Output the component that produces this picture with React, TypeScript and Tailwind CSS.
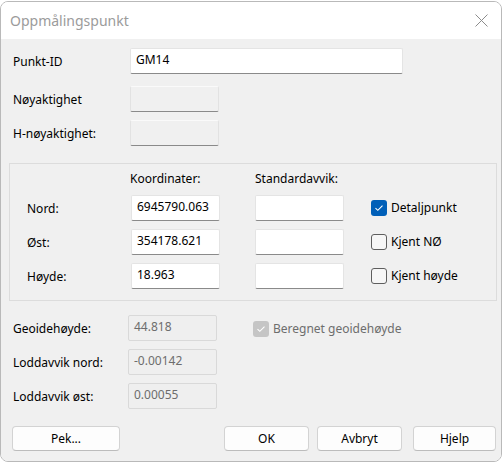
import React from 'react';

const font = { fontFamily: '"Noto Sans", "Open Sans", sans-serif' };

interface FieldProps {
  value?: string;
  width?: string;
  variant?: 'edit' | 'readonly' | 'disabled';
}

const Field: React.FC<FieldProps> = ({ value = '', width = 'w-[89px]', variant = 'edit' }) => {
  const look =
    variant === 'edit'
      ? 'bg-white border-[#e4e4e4] border-b-[#8a8a8a] text-black'
      : variant === 'readonly'
        ? 'bg-[#f0f0f0] border-[#e2e2e2] border-t-[#fafafa] border-b-[#8a8a8a] text-black'
        : 'bg-[#efefef] border-[#d9d9d9] text-[#6d6d6d]';
  return (
    <div className={`${width} h-[26px] shrink-0 border rounded-[2px] pl-[5px] pt-[2px] text-[12px] leading-[18px] ${look}`}>
      {value}
    </div>
  );
};

interface CheckProps {
  label: string;
  checked?: boolean;
  disabled?: boolean;
}

const Check: React.FC<CheckProps> = ({ label, checked, disabled }) => (
  <div className="flex items-center gap-[4px]">
    <div
      className={`w-[16px] h-[16px] rounded-[3px] flex items-center justify-center ${
        disabled
          ? 'bg-[#c5c5c5]'
          : checked
            ? 'bg-[#005fb8]'
            : 'bg-[#f6f6f6] border border-[#5e5e5e]'
      }`}
    >
      {checked && (
        <svg width="10" height="8" viewBox="0 0 10 8" fill="none">
          <path d="M1.5 4.2 L3.8 6.3 L8.5 1.6" stroke="white" strokeWidth="1.1" />
        </svg>
      )}
    </div>
    <span className={`text-[12px] ${disabled ? 'text-[#6d6d6d]' : 'text-black'}`}>{label}</span>
  </div>
);

const Btn: React.FC<{ label: string; width: string }> = ({ label, width }) => (
  <div
    className={`${width} h-[25px] rounded-[4px] bg-[#fdfdfd] border border-[#d3d3d3] border-b-[#bcbcbc] flex items-center justify-center text-[12px] text-black`}
  >
    {label}
  </div>
);

const Row: React.FC<{ label: string; children: React.ReactNode; labelWidth: string; className?: string }> = ({
  label,
  children,
  labelWidth,
  className = ''
}) => (
  <div className={`flex items-center h-[26px] ${className}`}>
    <span className={`${labelWidth} shrink-0 text-[12px] text-black pt-[1px]`}>{label}</span>
    {children}
  </div>
);

export default function App() {
  return (
    <div className="w-[503px] h-[463px] bg-white pt-[1px]" style={font}>
      <div className="w-[502px] h-[461px] border border-[#b9b9b9] rounded-[8px] overflow-hidden flex flex-col">
        {/* title bar */}
        <div className="h-[37px] bg-white flex items-center justify-between pl-[9px] pr-[13px] shrink-0">
          <span className="text-[14px] text-[#9b9b9b] pb-[1px]">Oppmålingspunkt</span>
          <svg width="13" height="13" viewBox="0 0 13 13">
            <path d="M0.5 0.5 L12.5 12.5 M12.5 0.5 L0.5 12.5" stroke="#8c8c8c" strokeWidth="1" />
          </svg>
        </div>

        {/* body */}
        <div className="flex-1 bg-[#f0f0f0] pl-[12px] pr-[5px] pt-[9px]">
          <Row label="Punkt-ID" labelWidth="w-[117px]">
            <Field value="GM14" width="w-[273px]" />
          </Row>
          <Row label="Nøyaktighet" labelWidth="w-[117px]" className="mt-[12px]">
            <Field variant="readonly" />
          </Row>
          <Row label="H-nøyaktighet:" labelWidth="w-[117px]" className="mt-[8px]">
            <Field variant="readonly" />
          </Row>

          {/* group box */}
          <div className="ml-[-4px] w-[488px] h-[138px] mt-[17px] border border-[#dcdcdc] pl-[17px] pt-[7px]">
            <div className="flex text-[12px] text-black h-[16px] leading-[16px]">
              <span className="ml-[103px] w-[125px]">Koordinater:</span>
              <span>Standardavvik:</span>
            </div>
            <div className="flex flex-col gap-[8px] mt-[8px]">
              <Row label="Nord:" labelWidth="w-[104px]">
                <Field value="6945790.063" />
                <div className="ml-[35px]"><Field /></div>
                <div className="ml-[27px]"><Check label="Detaljpunkt" checked /></div>
              </Row>
              <Row label="Øst:" labelWidth="w-[104px]">
                <Field value="354178.621" />
                <div className="ml-[35px]"><Field /></div>
                <div className="ml-[27px]"><Check label="Kjent NØ" /></div>
              </Row>
              <Row label="Høyde:" labelWidth="w-[104px]">
                <Field value="18.963" />
                <div className="ml-[35px]"><Field /></div>
                <div className="ml-[27px]"><Check label="Kjent høyde" /></div>
              </Row>
            </div>
          </div>

          <div className="flex flex-col gap-[8px] mt-[14px]">
            <Row label="Geoidehøyde:" labelWidth="w-[115px]">
              <Field value="44.818" variant="disabled" />
              <div className="ml-[36px] pt-[2px]"><Check label="Beregnet geoidehøyde" checked disabled /></div>
            </Row>
            <Row label="Loddavvik nord:" labelWidth="w-[115px]">
              <Field value="-0.00142" variant="disabled" />
            </Row>
            <Row label="Loddavvik øst:" labelWidth="w-[115px]">
              <Field value="0.00055" variant="disabled" />
            </Row>
          </div>

          <div className="flex mt-[17px] ml-[-1px]">
            <Btn label="Pek..." width="w-[108px]" />
            <div className="ml-[104px] flex gap-[8px]">
              <Btn label="OK" width="w-[85px]" />
              <Btn label="Avbryt" width="w-[85px]" />
              <div className="ml-[3px]"><Btn label="Hjelp" width="w-[83px]" /></div>
            </div>
          </div>
        </div>
      </div>
    </div>
  );
}
